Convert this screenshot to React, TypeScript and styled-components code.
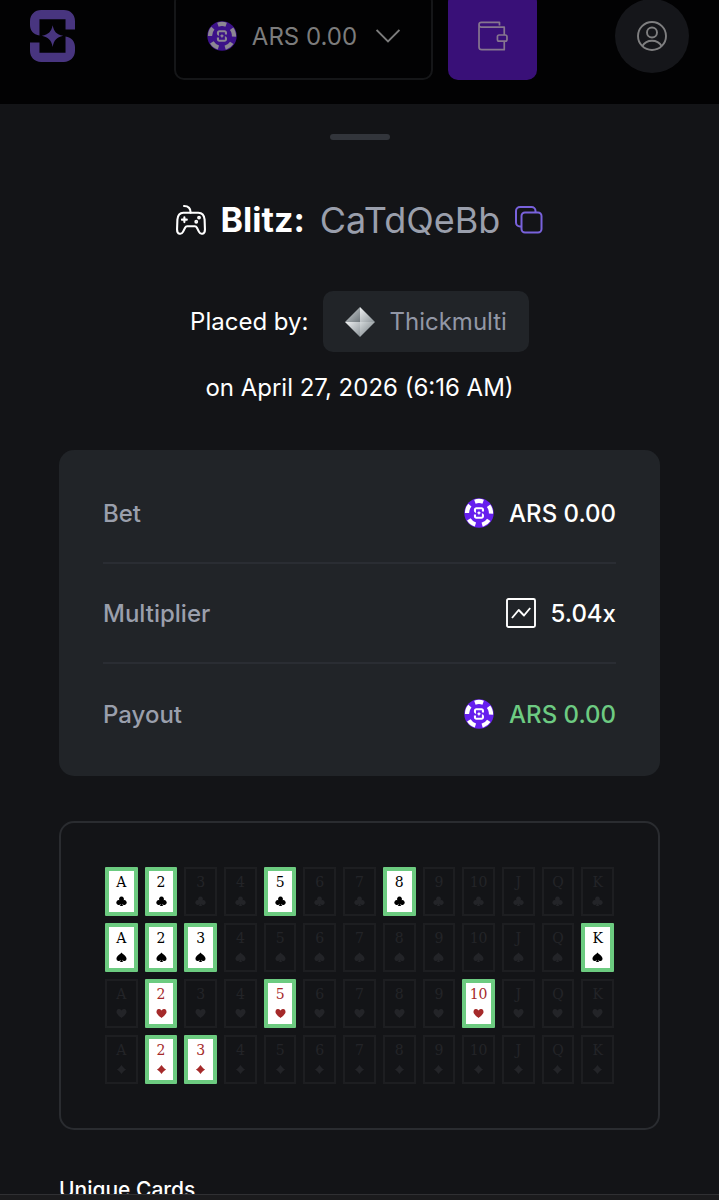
import styled, { createGlobalStyle, css } from "styled-components";

const GlobalStyle = createGlobalStyle`
  * {
    box-sizing: border-box;
  }

  body {
    margin: 0;
    background: #131417;
    color: #fff;
    font-family: Inter, "Liberation Sans", sans-serif;
  }

  button {
    font: inherit;
    border: 0;
    padding: 0;
    cursor: pointer;
  }
`;

const ranks = ["A", "2", "3", "4", "5", "6", "7", "8", "9", "10", "J", "Q", "K"];

type SuitName = "clubs" | "spades" | "hearts" | "diamonds";

const suitRows: { suit: SuitName; drawn: string[] }[] = [
  { suit: "clubs", drawn: ["A", "2", "5", "8"] },
  { suit: "spades", drawn: ["A", "2", "3", "K"] },
  { suit: "hearts", drawn: ["2", "5", "10"] },
  { suit: "diamonds", drawn: ["2", "3"] },
];

const suitPaths: Record<SuitName, string> = {
  clubs:
    "M12 1a5.500 5.500 0 0 1 4.700 8A5.300 5.300 0 1 1 13.500 17c.2 2.200 1 4 2.500 5H8c1.500-1 2.300-2.800 2.500-5A5.300 5.300 0 1 1 7.300 9 5.500 5.500 0 0 1 12 1z",
  spades:
    "M12 1c3 4 11 8 11 13.500a5 5 0 0 1-9.500 2.300c.2 2.400 1 4 2.500 5.200H8c1.500-1.200 2.300-2.800 2.500-5.200A5 5 0 0 1 1 14.500C1 9 9 5 12 1z",
  hearts:
    "M12 22C8 18 1 13.500 1 8a5.800 5.800 0 0 1 11-2.500A5.800 5.800 0 0 1 23 8c0 5.500-7 10-11 14z",
  diamonds: "M12 2c2.500 4 6 7.500 10 10-4 2.500-7.500 6-10 10-2.500-4-6-7.500-10-10 4-2.500 7.500-6 10-10z",
};

const LogoShape = () => (
  <>
    <path d="M33 0H100C120 0 133 14 133 33V57H105V27H28V75C10 72 0 60 0 44V33C0 14 14 0 33 0Z" />
    <path
      transform="rotate(180 66.5 76.5)"
      d="M33 0H100C120 0 133 14 133 33V57H105V27H28V75C10 72 0 60 0 44V33C0 14 14 0 33 0Z"
    />
    <path d="M67 45C71 64 78 72 98 76C78 81 71 89 67 109C63 89 55 81 35 76C55 72 63 64 67 45Z" />
  </>
);

const Chip = ({ dim = false }: { dim?: boolean }) => (
  <svg width="30" height="30" viewBox="0 0 30 30" aria-hidden="true">
    <circle cx="15" cy="15" r="14.7" fill={dim ? "#3c1189" : "#661fee"} />
    <circle
      cx="15"
      cy="15"
      r="12"
      fill="none"
      stroke={dim ? "#8c8792" : "#fff"}
      strokeWidth="4.2"
      strokeDasharray="8.4 6.68"
      transform="rotate(-110 15 15)"
    />
    <g transform="translate(9.9 9.2) scale(0.076)" fill={dim ? "#8c8792" : "#fff"}>
      <LogoShape />
    </g>
  </svg>
);

const GamepadIcon = () => (
  <svg width="30" height="30" viewBox="0 0 86 86" fill="none" stroke="#fff" strokeWidth="6" strokeLinecap="round" strokeLinejoin="round" aria-hidden="true">
    <path d="M23 3C35 3 42 9 42 22" />
    <path d="M21 22H64C76 22 81 30 82 42L83 70C83 85 70 85 66 77L60 65C59 63 57 61 54 61H32C29 61 27 63 26 65L20 77C16 85 3 85 3 70L4 42C5 30 10 22 21 22Z" />
    <path d="M24 35V49M17 42H31" />
    <circle cx="66" cy="36" r="2.5" />
    <circle cx="58" cy="48" r="2.5" />
  </svg>
);

const CopyIcon = () => (
  <svg width="28" height="28" viewBox="0 0 28 28" fill="none" stroke="#7962dc" strokeWidth="2" aria-hidden="true">
    <path d="M6.5 20.5H5a4 4 0 0 1-4-4V5a4 4 0 0 1 4-4h11.500a4 4 0 0 1 4 4v1.500" />
    <rect x="6.5" y="6.5" width="20" height="20" rx="3.5" />
  </svg>
);

const WalletIcon = () => (
  <svg width="30" height="30" viewBox="0 0 88 88" fill="none" stroke="#86768f" strokeWidth="5" strokeLinejoin="round" aria-hidden="true">
    <path d="M63 13V4H10C5 4 3 7 3 10C3 15 6 18 10 18H77V41M77 59V84H11C6 84 3 81 3 76V10" />
    <rect x="57" y="41" width="28" height="18" rx="5" />
  </svg>
);

const UserIcon = () => (
  <svg width="30" height="30" viewBox="0 0 30 30" fill="none" stroke="#7f7f80" strokeWidth="1.9" aria-hidden="true">
    <circle cx="15" cy="15" r="14" />
    <circle cx="15" cy="11.5" r="5" />
    <path d="M5.4 25C7.5 21.5 11 19.8 15 19.8S22.5 21.5 24.6 25" />
  </svg>
);

const ChevronIcon = () => (
  <svg width="24" height="14" viewBox="0 0 24 14" fill="none" stroke="#7c7c7c" strokeWidth="1.8" aria-hidden="true">
    <path d="M0.6 1L12 12.5L23.4 1" />
  </svg>
);

const ChartIcon = () => (
  <svg width="30" height="30" viewBox="0 0 30 30" fill="none" stroke="#fff" strokeWidth="1.9" strokeLinejoin="round" aria-hidden="true">
    <rect x="1" y="1" width="28" height="28" rx="1.5" />
    <path d="M6 20L12.700 12L18 17.500L24.200 10" />
  </svg>
);

const GemIcon = () => (
  <svg width="30" height="30" viewBox="0 0 30 30" aria-hidden="true">
    <defs>
      <linearGradient id="gemDark" x1="0" y1="0" x2="1" y2="1">
        <stop offset="0" stopColor="#d3d8da" />
        <stop offset="1" stopColor="#6f777c" />
      </linearGradient>
      <linearGradient id="gemLight" x1="0" y1="0" x2="1" y2="1">
        <stop offset="0" stopColor="#f0f2f3" />
        <stop offset="1" stopColor="#8b9398" />
      </linearGradient>
    </defs>
    <path d="M15 0V15H0Z" fill="url(#gemDark)" />
    <path d="M15 0L30 15H15Z" fill="url(#gemLight)" />
    <path d="M0 15H15V30Z" fill="url(#gemLight)" />
    <path d="M15 15H30L15 30Z" fill="url(#gemDark)" />
  </svg>
);

export default function App() {
  return (
    <Page>
      <GlobalStyle />
      <Header>
        <HomeLink href="#" aria-label="Home">
          <svg width="45" height="52" viewBox="0 0 133 153" fill="#48357f">
            <LogoShape />
          </svg>
        </HomeLink>
        <Wallet>
          <CurrencyButton type="button" aria-haspopup="listbox">
            <Chip dim />
            <span>ARS 0.00</span>
            <ChevronIcon />
          </CurrencyButton>
          <WalletButton type="button" aria-label="Wallet">
            <WalletIcon />
          </WalletButton>
        </Wallet>
        <ProfileButton type="button" aria-label="Profile">
          <UserIcon />
        </ProfileButton>
      </Header>

      <Sheet>
        <Handle />
        <Title>
          <GamepadIcon />
          <strong>Blitz:</strong>
          <span>CaTdQeBb</span>
          <CopyButton type="button" aria-label="Copy bet id">
            <CopyIcon />
          </CopyButton>
        </Title>

        <PlacedBy>
          <span>Placed by:</span>
          <PlayerLink href="#">
            <GemIcon />
            Thickmulti
          </PlayerLink>
        </PlacedBy>
        <PlacedAt>on April 27, 2026 (6:16 AM)</PlacedAt>

        <Details>
          <Row>
            <dt>Bet</dt>
            <Value>
              <Chip />
              ARS 0.00
            </Value>
          </Row>
          <Row>
            <dt>Multiplier</dt>
            <Value>
              <ChartIcon />
              5.04x
            </Value>
          </Row>
          <Row>
            <dt>Payout</dt>
            <Value $win>
              <Chip />
              ARS 0.00
            </Value>
          </Row>
        </Details>

        <Board>
          {suitRows.map(({ suit, drawn }) =>
            ranks.map((rank) => (
              <Card
                key={suit + rank}
                $active={drawn.includes(rank)}
                $red={suit === "hearts" || suit === "diamonds"}
              >
                {rank}
                <svg width="11" height="11" viewBox="0 0 24 24" fill="currentColor" role="img" aria-label={suit}>
                  <path d={suitPaths[suit]} />
                </svg>
              </Card>
            ))
          )}
        </Board>

        <SectionTitle>Unique Cards</SectionTitle>
      </Sheet>
      <BottomBar />
    </Page>
  );
}

const Page = styled.div`
  display: flex;
  flex-direction: column;
  height: 100vh;
  overflow: hidden;
`;

/* the header row is shorter than its buttons, they run off the top edge */
const Header = styled.header`
  display: grid;
  grid-template-columns: 1fr auto 1fr;
  grid-template-rows: 72px;
  align-items: center;
  flex: none;
  height: 104px;
  padding: 0 30px 32px 22px;
  background: #020203;
  overflow: hidden;
`;

const HomeLink = styled.a`
  display: flex;
  padding-left: 8px;
`;

const Wallet = styled.div`
  display: flex;
  align-items: center;
  gap: 15px;
  height: 72px;
`;

const CurrencyButton = styled.button`
  display: flex;
  align-items: center;
  gap: 15px;
  height: 88px;
  padding: 0 31px;
  flex: none;
  background: transparent;
  border: 2px solid #151618;
  border-radius: 10px;
  color: #7c7c7c;
  font-size: 24px;

  span {
    margin-right: 4px;
  }
`;

const WalletButton = styled.button`
  display: flex;
  align-items: center;
  justify-content: center;
  flex: none;
  width: 89px;
  height: 88px;
  background: #391078;
  border-radius: 10px;
`;

const ProfileButton = styled.button`
  display: flex;
  align-items: center;
  justify-content: center;
  justify-self: end;
  width: 74px;
  height: 74px;
  background: #15161a;
  border-radius: 50%;
`;

const Sheet = styled.main`
  display: flex;
  flex-direction: column;
  flex: 1;
  min-height: 0;
  padding: 30px 59px 0;
  overflow: hidden;

  > * {
    flex: none;
  }
`;

const Handle = styled.div`
  align-self: center;
  width: 60px;
  height: 6px;
  background: #32353b;
  border-radius: 3px;
`;

const Title = styled.h1`
  display: flex;
  align-items: center;
  justify-content: center;
  gap: 15px;
  margin: 58px 0 0;
  font-size: 36px;
  font-weight: 400;
  line-height: 44px;
  color: #9a9fac;

  strong {
    font-size: 34px;
    font-weight: 700;
    color: #fff;
  }
`;

const CopyButton = styled.button`
  display: flex;
  background: transparent;
`;

const PlacedBy = styled.div`
  display: flex;
  align-items: center;
  justify-content: center;
  gap: 15px;
  margin-top: 49px;
  font-size: 24px;
`;

const PlayerLink = styled.a`
  display: flex;
  align-items: center;
  gap: 14px;
  height: 61px;
  padding: 0 22px;
  background: #212428;
  border-radius: 10px;
  color: #9297a6;
  text-decoration: none;
`;

const PlacedAt = styled.p`
  margin: 20px 0 0;
  font-size: 24px;
  line-height: 32px;
  text-align: center;
`;

const Details = styled.dl`
  margin: 46px 0 0;
  padding: 14px 44px 12px;
  background: #212428;
  border-radius: 15px;
`;

const Row = styled.div`
  display: flex;
  align-items: center;
  justify-content: space-between;
  height: 100px;
  font-size: 24px;
  font-weight: 500;
  color: #9a9fac;

  &:not(:last-child) {
    border-bottom: 2px solid #2a2d33;
  }
`;

const Value = styled.dd<{ $win?: boolean }>`
  display: flex;
  align-items: center;
  gap: 15px;
  margin: 0;
  color: ${({ $win }) => ($win ? "#6dcb82" : "#fff")};
`;

const Board = styled.div`
  display: grid;
  grid-template-columns: repeat(13, 1fr);
  gap: 7px;
  margin-top: 45px;
  padding: 44px;
  border: 2px solid #2a2c30;
  border-radius: 15px;
`;

const Card = styled.div<{ $active: boolean; $red: boolean }>`
  display: flex;
  flex-direction: column;
  align-items: center;
  justify-content: center;
  gap: 6px;
  min-width: 0;
  height: 49px;
  padding-bottom: 2px;
  border: 2px solid #1d1e21;
  color: #232428;
  font-family: "DejaVu Serif", serif;
  font-size: 14px;
  line-height: 16px;

  ${({ $active, $red }) =>
    $active &&
    css`
      background: #fff;
      border: 4px solid #6ccb80;
      border-radius: 1px;
      color: ${$red ? "#a52a2a" : "#000"};
    `}
`;

const SectionTitle = styled.h2`
  margin: 46px 0 0;
  font-size: 21px;
  font-weight: 500;
  line-height: 28px;
`;

const BottomBar = styled.div`
  flex: none;
  height: 6px;
  background: #1b1b1d;
  border-top: 1px solid #303033;
`;
